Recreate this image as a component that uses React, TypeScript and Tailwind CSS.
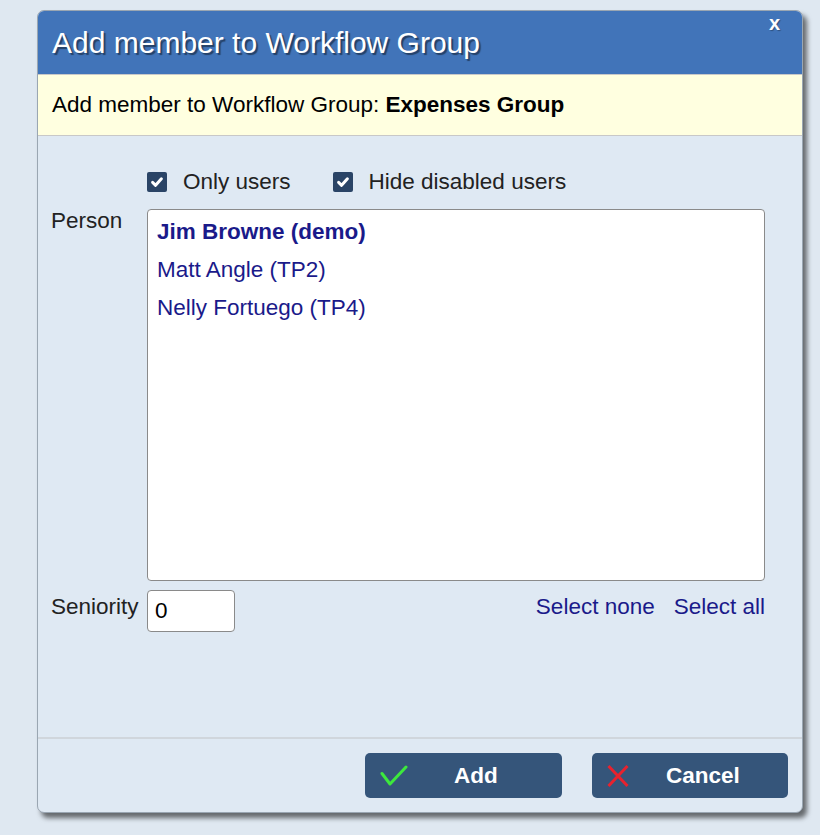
import React from "react";

function Check() {
  return (
    <svg width="14" height="14" viewBox="0 0 14 14">
      <path d="M2.6 7.4 L5.6 10.3 L11.4 3.8" stroke="white" strokeWidth="3" fill="none" strokeLinecap="round" strokeLinejoin="round" />
    </svg>
  );
}

export default function App() {
  return (
    <div
      className="w-[820px] h-[835px] bg-[#dfe8f1] pt-[10px] pl-[37px]"
      style={{ fontFamily: '"Liberation Sans", Arial, sans-serif' }}
    >
      <div className="w-[766px] h-[803px] rounded-[7px] bg-[#dfe9f3] shadow-[4px_5px_5px_rgba(0,0,0,0.55)] flex flex-col overflow-hidden border border-[#9aa6b2]">
        <div className="relative h-[63px] bg-[#4174b9] flex items-center pl-[14px] shrink-0">
          <span className="text-white text-[30px] leading-[36px] [text-shadow:2px_2px_1px_rgba(0,0,0,0.45)]">
            Add member to Workflow Group
          </span>
          <span className="absolute right-[22px] top-[0px] text-white font-bold text-[20px] leading-[24px] [text-shadow:1px_1px_1px_rgba(0,0,0,0.3)]">
            x
          </span>
        </div>
        <div className="h-[62px] bg-[#ffffe0] border-t border-b border-[#c8c8c8] flex items-center pl-[14px] shrink-0 text-[22.5px] leading-[28px] text-black">
          Add member to Workflow Group:&nbsp;<b>Expenses Group</b>
        </div>
        <div className="flex-1 flex flex-col">
          <div className="flex items-center pl-[109px] pt-[33px] text-[22.5px] leading-[26px] text-[#222]">
            <span className="w-[20px] h-[20px] bg-[#2a4466] rounded-[2px] flex items-center justify-center">
              <Check />
            </span>
            <span className="ml-[16px]">Only users</span>
            <span className="ml-[42px] w-[20px] h-[20px] bg-[#2a4466] rounded-[2px] flex items-center justify-center">
              <Check />
            </span>
            <span className="ml-[16px]">Hide disabled users</span>
          </div>
          <div className="flex mt-[14px] pl-[13px]">
            <div className="w-[96px] text-[22.5px] leading-[24px] text-[#222]">Person</div>
            <div className="w-[618px] h-[372px] bg-white border border-[#8a8a8a] rounded-[4px] pt-[3px] pl-[9px] text-[22.5px] text-[#1a1a8a] leading-[38px]">
              <div className="font-bold">Jim Browne (demo)</div>
              <div>Matt Angle (TP2)</div>
              <div>Nelly Fortuego (TP4)</div>
            </div>
          </div>
          <div className="flex mt-[9px] pl-[13px] items-start">
            <div className="w-[96px] text-[22.5px] leading-[24px] text-[#222] pt-[5px]">Seniority</div>
            <div className="w-[88px] h-[42px] bg-white border border-[#8a8a8a] rounded-[4px] flex items-center pl-[7px] text-[22.5px] text-black">
              0
            </div>
            <div className="flex-1 flex justify-end pr-[37px] pt-[5px] text-[22.5px] leading-[24px] text-[#1a1a8a] gap-[19px]">
              <span>Select none</span>
              <span>Select all</span>
            </div>
          </div>
          <div className="flex-1" />
          <div className="border-t-2 border-[#d0d6dc] h-[75px] flex items-start justify-end pr-[14px] pt-[14px] gap-[30px]">
            <button className="w-[197px] h-[45px] bg-[#35557a] rounded-[5px] flex items-center text-white font-bold text-[22.5px]">
              <svg className="ml-[15px]" width="28" height="22" viewBox="0 0 28 22">
                <path d="M2 8.5 L10 19 L26 2" stroke="#3de83d" strokeWidth="3" fill="none" strokeLinecap="round" strokeLinejoin="round" />
              </svg>
              <span className="ml-[46px]">Add</span>
            </button>
            <button className="w-[196px] h-[45px] bg-[#35557a] rounded-[5px] flex items-center text-white font-bold text-[22.5px]">
              <svg className="ml-[14px]" width="24" height="24" viewBox="0 0 24 24">
                <path d="M2.5 2 L21.5 22 M21.5 2 L2.5 22" stroke="#e8222e" strokeWidth="3" fill="none" strokeLinecap="butt" />
              </svg>
              <span className="ml-[36px]">Cancel</span>
            </button>
          </div>
        </div>
      </div>
    </div>
  );
}
